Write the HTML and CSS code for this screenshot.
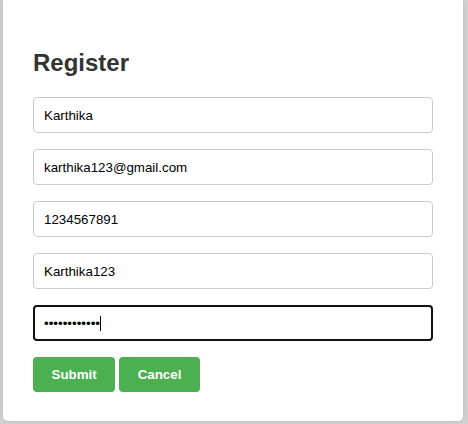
FILE: index.html
```html
<!DOCTYPE html>
<html lang="en">
<head>
<meta charset="utf-8">
<title>Register</title>
<link rel="stylesheet" href="styles.css">
</head>
<body>
<div class="card">
  <h2 class="title">Register</h2>
  <form class="form">
    <input class="field" type="text" value="Karthika">
    <input class="field" type="email" value="karthika123@gmail.com">
    <input class="field" type="text" value="1234567891">
    <input class="field" type="text" value="Karthika123">
    <div class="pw-wrap">
      <input class="field field-focus" type="password" value="Karthika@123">
      <span class="caret"></span>
    </div>
    <div class="actions">
      <button class="btn" type="button">Submit</button>
      <button class="btn" type="button">Cancel</button>
    </div>
  </form>
</div>
</body>
</html>
```

FILE: styles.css
```css
html, body {
  margin: 0;
  padding: 0;
}
body {
  background: #d3d3d3;
  padding: 0 5px 3px 3px;
  font-family: "Liberation Sans", Arial, sans-serif;
}
.card {
  background: #fff;
  border-radius: 0 0 5px 5px;
  box-shadow: 0 0 6px rgba(0, 0, 0, 0.12);
  padding: 30px 30px 29px 30px;
}
.title {
  margin: 19px 0 20px;
  font-size: 24px;
  line-height: 28px;
  font-weight: bold;
  color: #333;
}
.form {
  display: flex;
  flex-direction: column;
  gap: 16px;
}
.field {
  box-sizing: border-box;
  width: 100%;
  height: 36px;
  margin: 0;
  padding: 0 10px;
  border: 1px solid #ccc;
  border-radius: 4px;
  font-family: "Liberation Sans", Arial, sans-serif;
  font-size: 13.33px;
  color: #000;
  background: #fff;
  outline: none;
}
.pw-wrap {
  position: relative;
}
.field-focus {
  display: block;
  border: 2px solid #111;
  padding: 0 9px;
  caret-color: transparent;
}
.caret {
  position: absolute;
  left: 67px;
  top: 11px;
  width: 1px;
  height: 15px;
  background: #000;
}
.actions {
  display: flex;
  gap: 4px;
}
.btn {
  height: 35px;
  padding: 0 18.5px;
  border: none;
  border-radius: 4px;
  background: #4caf50;
  color: #fff;
  font-family: "Liberation Sans", Arial, sans-serif;
  font-size: 13.33px;
  font-weight: bold;
  cursor: pointer;
}
```
